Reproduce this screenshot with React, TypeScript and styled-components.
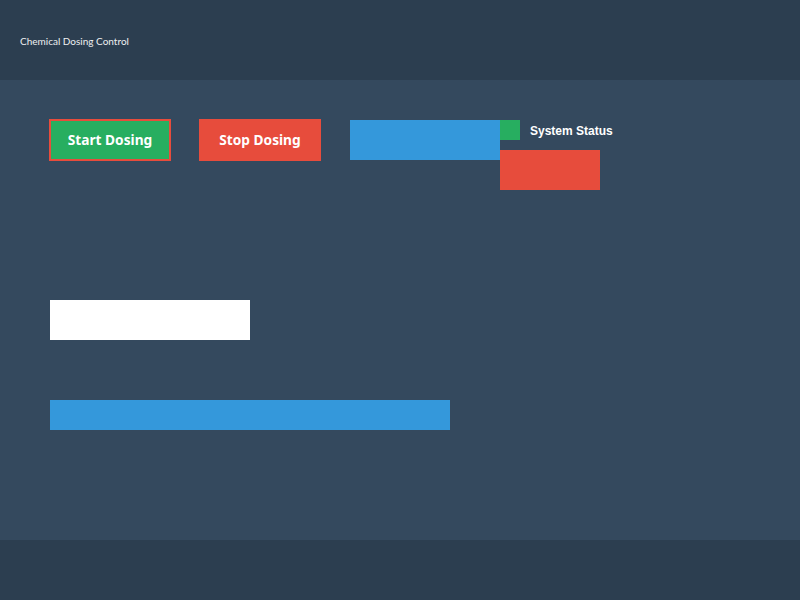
import React from "react";
import styled, { createGlobalStyle } from "styled-components";

const Global = createGlobalStyle`
  html, body { margin: 0; padding: 0; background: #34495e; }
  * { box-sizing: border-box; }
`;

const Page = styled.div`
  width: 800px;
  height: 600px;
  display: flex;
  flex-direction: column;
`;

const Header = styled.header`
  height: 80px;
  background: #2c3e50;
  display: flex;
  align-items: center;
  padding-left: 20px;
  padding-top: 2px;
  color: #ecf0f1;
  font-family: Lato, sans-serif;
  font-size: 10px;
`;

const Main = styled.main`
  height: 460px;
  background: #34495e;
  padding: 40px 50px;
  display: flex;
  flex-direction: column;
  align-items: flex-start;
`;

const Footer = styled.footer`
  height: 60px;
  background: #2c3e50;
`;

const ControlRow = styled.div`
  display: flex;
  align-items: flex-start;
  margin: -1px 0 0 -1px;
`;

const Button = styled.button<{ $bg: string; $gap?: number }>`
  width: 122px;
  height: 42px;
  margin-left: ${(p) => p.$gap ?? 0}px;
  background: ${(p) => p.$bg};
  border: 2px solid #e74c3c;
  color: #ffffff;
  font-family: "Noto Sans", sans-serif;
  font-weight: 700;
  font-size: 13.7px;
  padding: 0 0 1px;
  cursor: pointer;
`;

const Block = styled.div<{ $w: number; $h: number; $bg: string }>`
  width: ${(p) => p.$w}px;
  height: ${(p) => p.$h}px;
  background: ${(p) => p.$bg};
  flex-shrink: 0;
`;

const Indicator = styled(Block)`
  margin-left: 29px;
  margin-top: 1px;
`;

const StatusGroup = styled.div`
  display: flex;
  flex-direction: column;
  margin-top: 1px;
  gap: 10px;
`;

const StatusHead = styled.div`
  display: flex;
  align-items: center;
  gap: 10px;
`;

const StatusLabel = styled.span`
  color: #ffffff;
  font-family: "Liberation Sans", Arial, sans-serif;
  font-weight: 700;
  font-size: 12px;
  padding-top: 2px;
`;

const WhiteBox = styled(Block)`
  margin-top: 110px;
`;

const Bar = styled(Block)`
  margin-top: 60px;
`;

export default function App() {
  return (
    <Page>
      <Global />
      <Header>Chemical Dosing Control</Header>
      <Main>
        <ControlRow>
          <Button $bg="#27ae60">Start Dosing</Button>
          <Button $bg="#e74c3c" $gap={28}>Stop Dosing</Button>
          <Indicator $w={150} $h={40} $bg="#3498db" />
          <StatusGroup>
            <StatusHead>
              <Block $w={20} $h={20} $bg="#27ae60" />
              <StatusLabel>System Status</StatusLabel>
            </StatusHead>
            <Block $w={100} $h={40} $bg="#e74c3c" />
          </StatusGroup>
        </ControlRow>
        <WhiteBox $w={200} $h={40} $bg="#ffffff" />
        <Bar $w={400} $h={30} $bg="#3498db" />
      </Main>
      <Footer />
    </Page>
  );
}
